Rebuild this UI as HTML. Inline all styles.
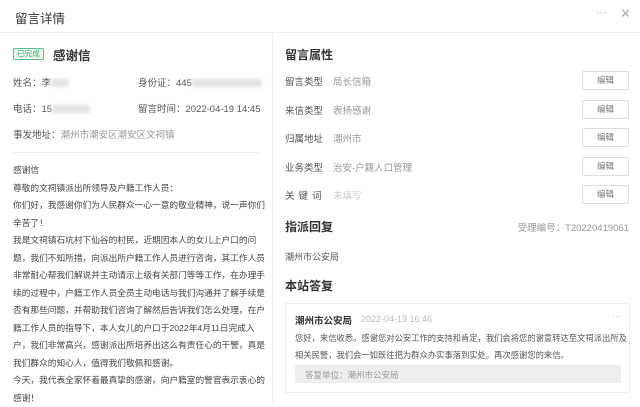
<!DOCTYPE html><html><head><meta charset="utf-8"><style>
*{margin:0;padding:0;box-sizing:border-box}
body{width:640px;height:403px;overflow:hidden;background:#fff;font-family:"Liberation Sans","Noto Sans CJK SC",sans-serif;color:#333;position:relative}
.a{position:absolute;white-space:nowrap}
.s{font-size:9.5px;color:#555}
.g{color:#999}
.h{font-size:12px;font-weight:bold;color:#333}
.btn{position:absolute;left:582px;width:47px;height:19px;border:1px solid #ddd;border-radius:2px;font-size:8.5px;color:#777;text-align:center;line-height:17px}
.blur{display:inline-block;background:#e4e4e4;height:8px;vertical-align:middle;filter:blur(1.5px)}
.txt{position:absolute;left:13px;top:162px;width:254px;font-size:8.7px;line-height:17.5px;color:#444;white-space:normal}
</style></head><body>
<div class="a" style="left:15px;top:8px;font-size:12.5px;color:#333">留言详情</div>
<div class="a" style="left:596px;top:7px;font-size:11px;color:#aaa">···</div>
<div class="a" style="left:620px;top:6px;font-size:13px;color:#aaa">✕</div>
<div class="a" style="left:0;top:32px;width:640px;height:1px;background:#eee"></div>
<div class="a" style="left:272px;top:33px;width:1px;height:370px;background:#eee"></div>

<div class="a" style="left:13px;top:48px;width:31px;height:12px;border:1px solid #5bc08a;background:#eaf8ef;color:#3aa868;font-size:7.5px;text-align:center;line-height:10px;border-radius:2px">已完成</div>
<div class="a h" style="left:53px;top:45px;font-size:12.5px">感谢信</div>
<div class="a s" style="left:13px;top:75px">姓名：李<span class="blur" style="width:18px"></span></div>
<div class="a s" style="left:138px;top:75px">身份证：445<span class="blur" style="width:70px"></span></div>
<div class="a s" style="left:13px;top:101px">电话：15<span class="blur" style="width:38px"></span></div>
<div class="a s" style="left:138px;top:101px">留言时间：2022-04-19 14:45</div>
<div class="a s" style="left:13px;top:127px">事发地址：<span class="g">潮州市潮安区潮安区文祠镇</span></div>
<div class="a" style="left:13px;top:152px;width:246px;height:1px;background:#eee"></div>
<div class="txt">感谢信<br>尊敬的文祠镇派出所领导及户籍工作人员：<br>你们好，我感谢你们为人民群众一心一意的敬业精神，说一声你们辛苦了！<br>我是文祠镇石坑村下仙谷的村民，近期因本人的女儿上户口的问题，我们不知所措，向派出所户籍工作人员进行咨询，其工作人员非常耐心帮我们解说并主动请示上级有关部门等等工作，在办理手续的过程中，户籍工作人员全员主动电话与我们沟通并了解手续是否有那些问题，并帮助我们咨询了解然后告诉我们怎么处理，在户籍工作人员的指导下，本人女儿的户口于2022年4月11日完成入户，我们非常高兴，感谢派出所培养出这么有责任心的干警，真是我们群众的知心人，值得我们敬佩和感谢。<br>今天，我代表全家怀着最真挚的感谢，向户籍室的警官表示衷心的感谢！</div>

<div class="a h" style="left:285px;top:46px">留言属性</div>
<div class="a s" style="left:285px;top:74px">留言类型</div><div class="a s g" style="left:333px;top:74px">局长信箱</div><div class="btn" style="top:71px">编辑</div>
<div class="a s" style="left:285px;top:103px">来信类型</div><div class="a s g" style="left:333px;top:103px">表扬感谢</div><div class="btn" style="top:100px">编辑</div>
<div class="a s" style="left:285px;top:131px">归属地址</div><div class="a s g" style="left:333px;top:131px">潮州市</div><div class="btn" style="top:128px">编辑</div>
<div class="a s" style="left:285px;top:160px">业务类型</div><div class="a s g" style="left:333px;top:160px">治安-户籍人口管理</div><div class="btn" style="top:157px">编辑</div>
<div class="a s" style="left:285px;top:188px;letter-spacing:4px">关键词</div><div class="a s" style="left:333px;top:188px;color:#ccc">未填写</div><div class="btn" style="top:185px">编辑</div>

<div class="a h" style="left:285px;top:218px">指派回复</div>
<div class="a s g" style="right:11px;top:220px">受理编号：T20220419061</div>
<div class="a" style="left:285px;top:250px;font-size:9px;color:#555">潮州市公安局</div>
<div class="a h" style="left:285px;top:277px">本站答复</div>
<div class="a" style="left:285px;top:303px;width:345px;height:90px;border:1px solid #eee"></div>
<div class="a" style="left:295px;top:313px;font-size:9.5px;font-weight:bold;color:#333">潮州市公安局</div>
<div class="a" style="left:361px;top:314px;font-size:9px;color:#bbb">2022-04-19 16:46</div>
<div class="a" style="left:612px;top:311px;font-size:9px;color:#bbb">···</div>
<div class="a" style="left:295px;top:330px;width:334px;font-size:8.3px;line-height:17px;color:#555;white-space:normal">您好，来信收悉。感谢您对公安工作的支持和肯定，我们会将您的谢意转达至文祠派出所及相关民警，我们会一如既往把为群众办实事落到实处。再次感谢您的来信。</div>
<div class="a" style="left:295px;top:365px;width:326px;height:18px;background:#eee"></div>
<div class="a" style="left:305px;top:369px;font-size:8.5px;color:#999">答复单位：潮州市公安局</div>
</body></html>
